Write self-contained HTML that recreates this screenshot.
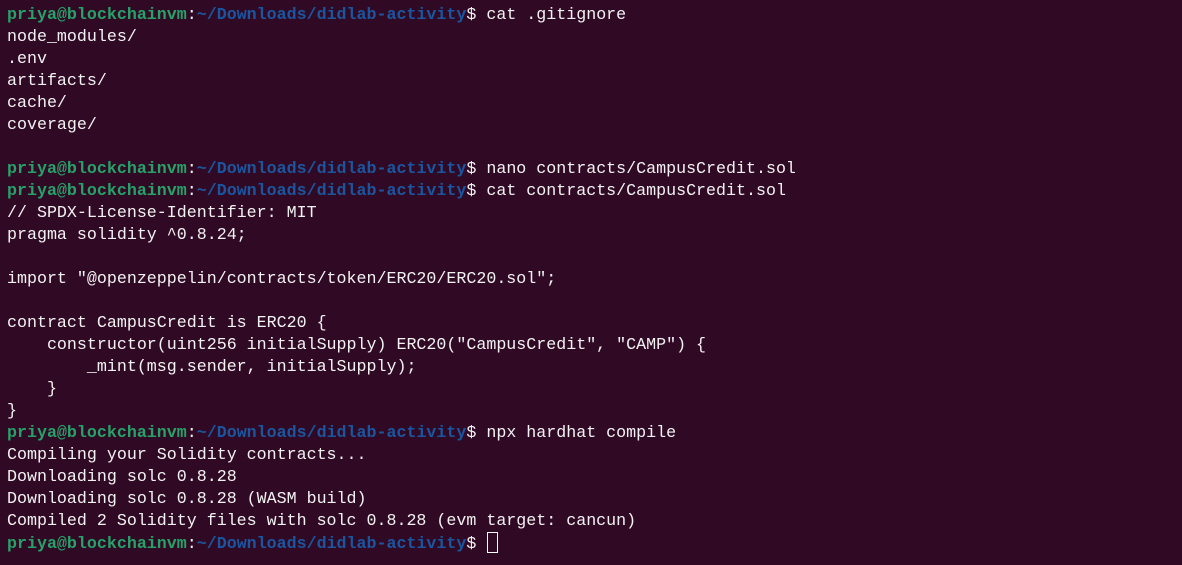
<!DOCTYPE html><html><head><style>
html,body{margin:0;background:#300a24;width:1182px;height:565px;overflow:hidden}
pre{margin:0;position:absolute;left:7px;top:4px;font-family:"Liberation Mono","DejaVu Sans Mono",monospace;font-size:16.65px;line-height:22px;color:#f2f2f2}
.u{color:#26a269;font-weight:bold}.p{color:#1a56a0;font-weight:bold}
.c{display:inline-block;width:9px;height:19px;border:1px solid #fff;vertical-align:-5px;margin-left:1px}
</style></head><body><pre><span class="u">priya@blockchainvm</span>:<span class="p">~/Downloads/didlab-activity</span>$ cat .gitignore
node_modules/
.env
artifacts/
cache/
coverage/

<span class="u">priya@blockchainvm</span>:<span class="p">~/Downloads/didlab-activity</span>$ nano contracts/CampusCredit.sol
<span class="u">priya@blockchainvm</span>:<span class="p">~/Downloads/didlab-activity</span>$ cat contracts/CampusCredit.sol
// SPDX-License-Identifier: MIT
pragma solidity ^0.8.24;

import "@openzeppelin/contracts/token/ERC20/ERC20.sol";

contract CampusCredit is ERC20 {
    constructor(uint256 initialSupply) ERC20("CampusCredit", "CAMP") {
        _mint(msg.sender, initialSupply);
    }
}
<span class="u">priya@blockchainvm</span>:<span class="p">~/Downloads/didlab-activity</span>$ npx hardhat compile
Compiling your Solidity contracts...
Downloading solc 0.8.28
Downloading solc 0.8.28 (WASM build)
Compiled 2 Solidity files with solc 0.8.28 (evm target: cancun)
<span class="u">priya@blockchainvm</span>:<span class="p">~/Downloads/didlab-activity</span>$ <span class="c"></span></pre></body></html>
